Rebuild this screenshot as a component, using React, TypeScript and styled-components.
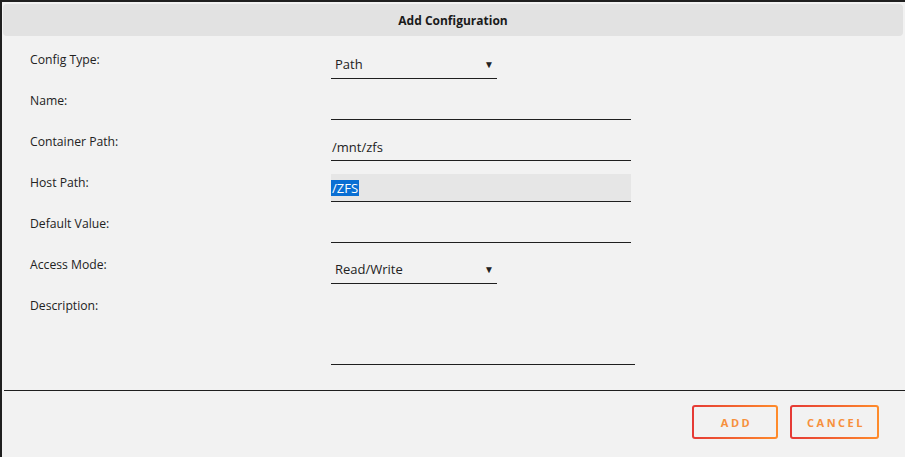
import styled, { createGlobalStyle } from "styled-components";

const GlobalStyle = createGlobalStyle`
  html, body {
    margin: 0;
    padding: 0;
    background: #f2f2f2;
    overflow: hidden;
  }
  body {
    font-family: "Open Sans", "Noto Sans", sans-serif;
    color: #222;
  }
`;

const Dialog = styled.div`
  box-sizing: border-box;
  width: 910px;
  height: 470px;
  border: 2px solid #1f1f1f;
  background: #f2f2f2;
  display: flex;
  flex-direction: column;
`;

const Header = styled.div`
  margin: 2px 5px 0 1px;
  height: 32px;
  padding-top: 1px;
  box-sizing: border-box;
  border-radius: 4px;
  background: #e2e2e2;
  display: flex;
  align-items: center;
  justify-content: center;
  font-size: 12px;
  font-weight: 700;
  color: #1a1a1a;
`;

const Form = styled.div`
  display: grid;
  grid-template-columns: 301px 1fr;
  row-gap: 13px;
  padding: 15px 0 0 28px;
`;

const Label = styled.div`
  font-size: 12.2px;
  line-height: 16px;
  padding-top: 1px;
  color: #222;
`;

const Field = styled.div<{ $width: number; $height?: number; $filled?: boolean }>`
  box-sizing: border-box;
  width: ${(p) => p.$width}px;
  height: ${(p) => p.$height ?? 28}px;
  border-bottom: 1px solid #1f1f1f;
  background: ${(p) => (p.$filled ? "#e6e6e6" : "transparent")};
  display: flex;
  align-items: ${(p) => (p.$height ? "flex-end" : "center")};
  justify-content: space-between;
  padding: 0 3px 0 1px;
  font-size: 13px;
  color: #222;
`;

const SelectText = styled.span`
  padding-left: 3px;
  margin-top: -2px;
`;

const Caret = styled.span`
  font-size: 10px;
  color: #222;
  margin-top: -1px;
`;

const Selected = styled.span`
  background: #0a6fd3;
  color: #fff;
  margin-left: -1px;
  padding: 0 1px 0 1px;
  line-height: 16px;
`;

const Divider = styled.div`
  margin: 25px 0 0 2px;
  border-top: 1px solid #1f1f1f;
`;

const Actions = styled.div`
  display: flex;
  justify-content: flex-end;
  gap: 12px;
  padding: 14px 29px 0 0;
`;

const Button = styled.button<{ $width: number }>`
  box-sizing: border-box;
  width: ${(p) => p.$width}px;
  height: 34px;
  border: 2px solid transparent;
  border-radius: 3px;
  background:
    linear-gradient(#f2f2f2, #f2f2f2) padding-box,
    linear-gradient(90deg, #e53935, #ff8c2b) border-box;
  font-family: "Open Sans", "Noto Sans", sans-serif;
  font-size: 11px;
  font-weight: 700;
  letter-spacing: 2.5px;
  color: #f7903c;
  padding: 0 0 0 3px;
  cursor: pointer;
`;

export default function App() {
  return (
    <>
      <GlobalStyle />
      <Dialog>
        <Header>Add Configuration</Header>
        <Form>
          <Label>Config Type:</Label>
          <Field $width={166}>
            <SelectText>Path</SelectText>
            <Caret>▼</Caret>
          </Field>

          <Label>Name:</Label>
          <Field $width={300} />

          <Label>Container Path:</Label>
          <Field $width={300}>/mnt/zfs</Field>

          <Label>Host Path:</Label>
          <Field $width={300} $filled>
            <Selected>/ZFS</Selected>
          </Field>

          <Label>Default Value:</Label>
          <Field $width={300} />

          <Label>Access Mode:</Label>
          <Field $width={166}>
            <SelectText>Read/Write</SelectText>
            <Caret>▼</Caret>
          </Field>

          <Label>Description:</Label>
          <Field $width={304} $height={68} />
        </Form>
        <Divider />
        <Actions>
          <Button $width={86}>ADD</Button>
          <Button $width={89}>CANCEL</Button>
        </Actions>
      </Dialog>
    </>
  );
}
